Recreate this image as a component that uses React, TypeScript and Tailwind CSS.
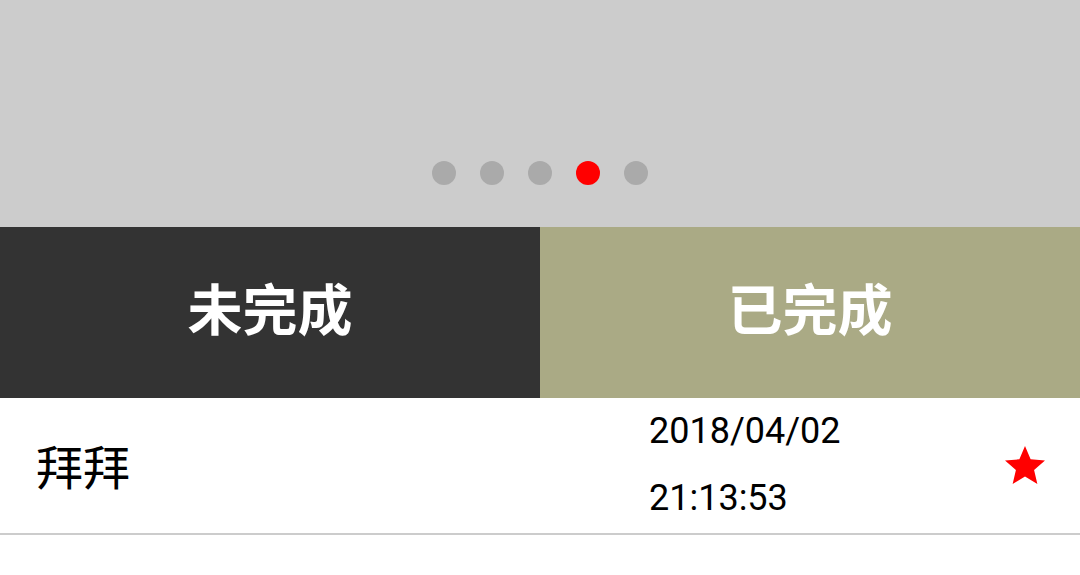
export default function App() {
  const dots = [false, false, false, true, false];
  return (
    <div className="w-[1080px] h-[575px] bg-white overflow-hidden" style={{ fontFamily: 'Roboto, "Noto Sans CJK SC", sans-serif' }}>
      <div className="h-[227px] bg-[#cccccc] flex items-end justify-center pb-[42px]">
        <div className="flex gap-[24px]">
          {dots.map((a, i) => (
            <div key={i} className={`w-[24px] h-[24px] rounded-full ${a ? 'bg-[#ff0000]' : 'bg-[#aaaaaa]'}`} />
          ))}
        </div>
      </div>
      <div className="flex h-[171px]">
        <div className="flex-1 bg-[#333333] flex items-center justify-center pb-[12px] text-white text-[55px] font-bold" style={{ fontFamily: '"Noto Sans CJK SC", sans-serif' }}>
          未完成
        </div>
        <div className="flex-1 bg-[#aaaa85] flex items-center justify-center pb-[12px] text-white text-[55px] font-bold" style={{ fontFamily: '"Noto Sans CJK SC", sans-serif' }}>
          已完成
        </div>
      </div>
      <div className="h-[137px] border-b-[2px] border-[#cccccc] flex items-center">
        <div className="w-[649px] pl-[36px] text-black text-[47px]" style={{ fontFamily: '"Noto Sans CJK SC", sans-serif' }}>
          拜拜
        </div>
        <div className="flex-1 flex flex-col text-black text-[36px] leading-[67px] pb-[2px]" style={{ fontFamily: 'Roboto, sans-serif' }}>
          <span>2018/04/02</span>
          <span>21:13:53</span>
        </div>
        <div className="pr-[31px]">
          <svg width="48" height="48" viewBox="0 0 24 24" fill="#ff0000">
            <path d="M12 17.27L18.18 21l-1.64-7.03L22 9.24l-7.19-.61L12 2 9.19 8.63 2 9.24l5.46 4.73L5.82 21z" />
          </svg>
        </div>
      </div>
    </div>
  );
}
